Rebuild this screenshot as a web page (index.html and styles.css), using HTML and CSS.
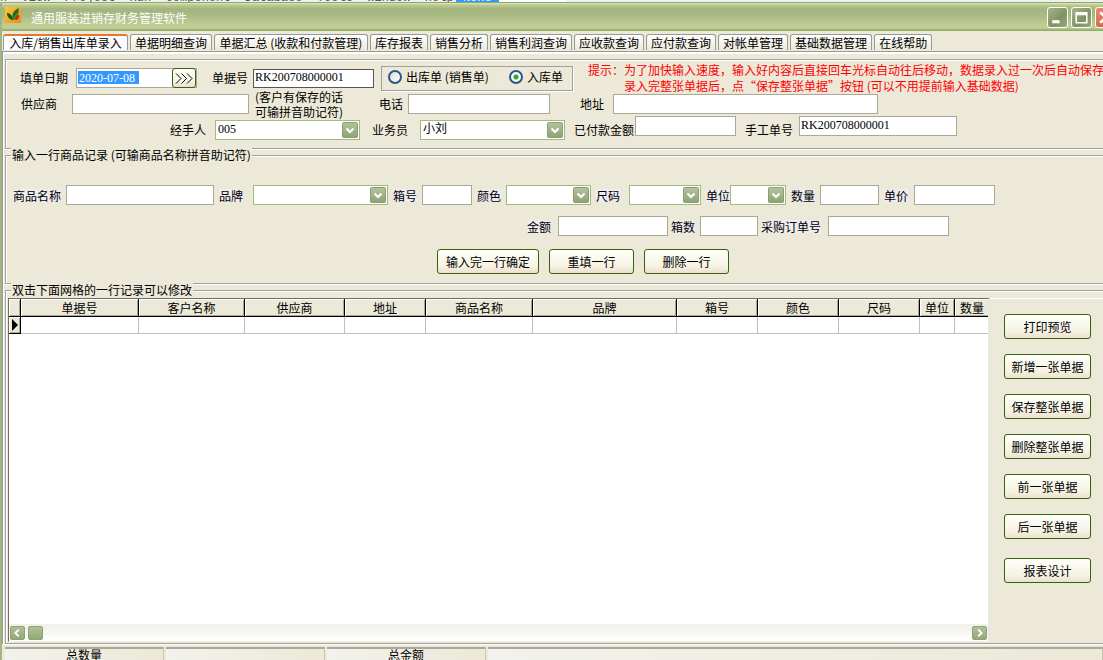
FILE: index.html
```html
<!DOCTYPE html>
<html lang="zh-CN">
<head>
<meta charset="utf-8">
<title>通用服装进销存财务管理软件</title>
<link rel="stylesheet" href="styles.css">
</head>
<body>
<svg class="defs" aria-hidden="true">
  <defs>
    <linearGradient id="btnGreen" x1="0" y1="0" x2="0" y2="1">
      <stop offset="0" stop-color="#b4c49c"/><stop offset="1" stop-color="#8ea272"/>
    </linearGradient>
    <symbol id="drop" viewBox="0 0 16 16">
      <rect x="0.5" y="0.5" width="15" height="15" rx="1" fill="url(#btnGreen)" stroke="#8a9c78"/>
      <path d="M4.500 6.500 8 10l3.500-3.500" fill="none" stroke="#fff" stroke-width="2.200"/>
    </symbol>
  </defs>
</svg>

<div class="backdrop"><span class="backdrop-menu">n&nbsp; View &nbsp;Project &nbsp;Run &nbsp;Component &nbsp;Database &nbsp;Tools &nbsp;Window &nbsp;Help</span><span class="backdrop-combo"><b>&lt;None&gt;</b></span></div>

<div class="window">
  <header class="titlebar">
    <svg class="logo" viewBox="0 0 16 16" aria-hidden="true">
      <defs><linearGradient id="lg" x1="0" y1="0" x2="1" y2="1"><stop offset="0" stop-color="#fcc83c"/><stop offset="1" stop-color="#ea8c14"/></linearGradient></defs>
      <rect width="16" height="16" fill="url(#lg)"/>
      <path d="M2 6c3 0 5 2 6 7C5 13 2 10 2 6z" fill="#0c5a1c"/>
      <path d="M8 13C6.500 8 8 4 13.500 1 14 6 12.500 11 8 13z" fill="#186a1c"/>
      <path d="M8.500 12c.500-3 2-5 4-7 0 3-1 6-4 7z" fill="#3c9a30"/>
      <path d="M10 13c0-3 1.500-5 4-5 .500 3-1 5-4 5z" fill="#c82818"/>
    </svg>
    <h1 class="title">通用服装进销存财务管理软件</h1>
    <div class="win-buttons">
      <button class="win-btn" aria-label="最小化"><svg viewBox="0 0 18 18"><path d="M4 13h7" stroke="#fff" stroke-width="3"/></svg></button>
      <button class="win-btn" aria-label="最大化"><svg viewBox="0 0 18 18"><path d="M4 4.500h10V14H4zM4 6h10" fill="none" stroke="#fff" stroke-width="1.500"/></svg></button>
      <button class="win-btn win-close" aria-label="关闭"><svg viewBox="0 0 18 18"><path d="M4 4l10 10M14 4 4 14" stroke="#fff" stroke-width="2.500"/></svg></button>
    </div>
  </header>

  <nav class="tabs">
    <button class="tab active">入库/销售出库单录入</button>
    <button class="tab">单据明细查询</button>
    <button class="tab wide">单据汇总 (收款和付款管理)</button>
    <button class="tab">库存报表</button>
    <button class="tab">销售分析</button>
    <button class="tab">销售利润查询</button>
    <button class="tab">应收款查询</button>
    <button class="tab">应付款查询</button>
    <button class="tab">对帐单管理</button>
    <button class="tab">基础数据管理</button>
    <button class="tab">在线帮助</button>
  </nav>

  <main class="page">
    <section class="group order">
      <div class="row order-a">
        <label for="date">填单日期</label>
        <div class="date-box"><input id="date" class="date-input" value="2020-07-08"><button class="push date-btn" aria-label="选择日期"><svg viewBox="0 0 18 11"><path d="M1 .5l5 5-5 5M6.500 .5l5 5-5 5M12 .5l5 5-5 5" fill="none" stroke="#000"/></svg></button></div>
        <label for="no">单据号</label>
        <input id="no" class="field dark" value="RK200708000001">
        <div class="radios">
          <label><input type="radio" name="kind">出库单 (销售单)</label>
          <label><input type="radio" name="kind" checked>入库单</label>
        </div>
        <p class="hint">提示：<span>为了加快输入速度，输入好内容后直接回车光标自动往后移动，数据录入过一次后自动保存<br>录入完整张单据后，点“保存整张单据”按钮 (可以不用提前输入基础数据)</span></p>
      </div>
      <div class="row order-b">
        <label for="supplier">供应商</label>
        <input id="supplier" class="field">
        <p class="note">(客户有保存的话<br>可输拼音助记符)</p>
        <label for="tel">电话</label>
        <input id="tel" class="field">
        <label for="addr" class="addr">地址</label>
        <input id="addr" class="field">
      </div>
      <div class="row order-c">
        <label for="handler">经手人</label>
        <span class="combo"><select id="handler"><option>005</option></select><svg><use href="#drop"/></svg></span>
        <label for="sales" class="sales">业务员</label>
        <span class="combo"><select id="sales"><option>小刘</option></select><svg><use href="#drop"/></svg></span>
        <label for="paid" class="close">已付款金额</label>
        <input id="paid" class="field top">
        <label for="manual" class="close">手工单号</label>
        <input id="manual" class="field top" value="RK200708000001">
      </div>
    </section>

    <section class="group entry">
      <h2 class="legend">输入一行商品记录 (可输商品名称拼音助记符)</h2>
      <div class="row entry-a">
        <label for="name">商品名称</label><input id="name" class="field">
        <label for="brand">品牌</label><span class="combo"><select id="brand"></select><svg><use href="#drop"/></svg></span>
        <label for="box">箱号</label><input id="box" class="field">
        <label for="color">颜色</label><span class="combo"><select id="color"></select><svg><use href="#drop"/></svg></span>
        <label for="size">尺码</label><span class="combo"><select id="size"></select><svg><use href="#drop"/></svg></span>
        <label for="unit">单位</label><span class="combo"><select id="unit"></select><svg><use href="#drop"/></svg></span>
        <label for="qty">数量</label><input id="qty" class="field">
        <label for="price">单价</label><input id="price" class="field">
      </div>
      <div class="row entry-b">
        <label for="amount">金额</label><input id="amount" class="field">
        <label for="boxes">箱数</label><input id="boxes" class="field">
        <label for="po">采购订单号</label><input id="po" class="field">
      </div>
      <div class="actions">
        <button class="push long">输入完一行确定</button>
        <button class="push">重填一行</button>
        <button class="push">删除一行</button>
      </div>
    </section>

    <section class="group records">
      <h2 class="legend">双击下面网格的一行记录可以修改</h2>
      <div class="records-body">
        <div class="grid">
          <div class="grid-view">
            <table>
              <colgroup><col class="w12"><col class="w118"><col class="w106"><col class="w100"><col class="w81"><col class="w107"><col class="w144"><col class="w81"><col class="w81"><col class="w81"><col class="w35"><col class="w35"></colgroup>
              <thead><tr><th></th><th>单据号</th><th>客户名称</th><th>供应商</th><th>地址</th><th>商品名称</th><th>品牌</th><th>箱号</th><th>颜色</th><th>尺码</th><th>单位</th><th>数量</th></tr></thead>
              <tbody><tr><th><svg class="marker" viewBox="0 0 6 12"><path d="M0 0l6 6-6 6z"/></svg></th><td></td><td></td><td></td><td></td><td></td><td></td><td></td><td></td><td></td><td></td><td></td></tr></tbody>
            </table>
          </div>
          <div class="scrollbar">
            <button class="scroll-btn" aria-label="向左"><svg viewBox="0 0 14 14"><path d="M8.500 3 4.500 7l4 4" fill="none" stroke="#fff" stroke-width="2.200"/></svg></button>
            <span class="thumb"></span>
            <button class="scroll-btn end" aria-label="向右"><svg viewBox="0 0 14 14"><path d="M5.500 3l4 4-4 4" fill="none" stroke="#fff" stroke-width="2.200"/></svg></button>
          </div>
        </div>
        <div class="side">
          <button class="push">打印预览</button>
          <button class="push">新增一张单据</button>
          <button class="push">保存整张单据</button>
          <button class="push">删除整张单据</button>
          <button class="push">前一张单据</button>
          <button class="push">后一张单据</button>
          <button class="push last">报表设计</button>
        </div>
      </div>
    </section>
  </main>

  <footer class="status">
    <span>总数量</span><span></span><span>总金额</span><span></span>
  </footer>
</div>
</body>
</html>
```
FILE: styles.css
```css
* { box-sizing: border-box; }

body, button, input, select, h1, h2, p {
  margin: 0;
  font: 12px/16px "Noto Sans CJK SC", sans-serif;
  color: #000;
}

body {
  height: 100vh;
  overflow: hidden;
  display: flex;
  flex-direction: column;
  background: #ece9d8;
}

input, select { font-family: "Liberation Serif", "Noto Sans CJK SC", serif; }

.defs { position: absolute; width: 0; height: 0; }

/* strip of the window behind */
.backdrop {
  flex: none;
  height: 2px;
  display: flex;
  align-items: flex-end;
  gap: 2px;
  overflow: hidden;
  background: #f0f0f0;
  font: 12px/8px "Liberation Mono", monospace;
  white-space: nowrap;
}
.backdrop-menu { color: #555; }
.backdrop-combo { width: 110px; background: #fff; }
.backdrop-combo b { background: #39f; color: #fff; font-weight: 400; }

.window {
  flex: 1;
  min-height: 0;
  display: flex;
  flex-direction: column;
  border-left: 2px solid #a3b57f;
}

.titlebar {
  flex: none;
  height: 29px;
  display: flex;
  align-items: center;
  padding-left: 3px;
  border-top: 1px solid #8fa86a;
  border-bottom: 1px solid #92ab68;
  background: linear-gradient(#dfe8b8 0, #bccb92 2px, #a4b47e 6px, #a9b984 12px, #c0cc94 22px, #c0cc94 25px, #9db070 27px);
}
.logo { width: 16px; height: 16px; margin-bottom: 4px; }
.title { padding-left: 10px; padding-top: 2px; color: #fff; }
.win-buttons { display: flex; gap: 3px; margin-left: auto; margin-right: -13px; padding-top: 2px; }
.win-btn {
  width: 21px;
  height: 21px;
  padding: 0;
  border: 1px solid #fff;
  border-radius: 3px;
  background: linear-gradient(135deg, #a5b58c, #7f9260 60%, #9cad7c);
}
.win-btn svg { display: block; }
.win-close { background: linear-gradient(135deg, #e89070, #c8502c); }

.tabs { flex: none; display: flex; padding: 3px 0 0 1px; gap: 2px; height: 20px; }
.tab {
  padding: 0 4px;
  height: 16px;
  line-height: 13px;
  white-space: nowrap;
  border: 1px solid #919b9c;
  border-bottom: 0;
  border-radius: 3px 3px 0 0;
  background: linear-gradient(#fff, #ece9d8);
}
.tab.active { width: 125px; background: #fcfcfe; border-top: 2px solid #e07a30; line-height: 12px; }
.tab.wide { width: 154px; }

.page {
  flex: 1;
  min-height: 0;
  display: flex;
  flex-direction: column;
  gap: 6px;
  padding: 7px 0 0 2px;
  border-top: 1px solid #919b9c;
  border-left: 1px solid #919b9c;
  box-shadow: inset 1px 2px #fff;
}

.group {
  border: solid #a0a0a0;
  border-width: 1px 0 1px 1px;
  box-shadow: inset 1px 1px #fff, 0 1px #fff;
}
.legend { width: max-content; padding: 0 1px; margin: -9px 0 0 5px; background: #ece9d8; white-space: nowrap; }

.row { display: grid; align-items: center; white-space: nowrap; }

.field {
  width: 100%;
  height: 20px;
  padding: 0 1px 2px;
  border: 1px solid #aca899;
  background: #fff;
}
.field.dark { height: 19px; border-color: #555; }
.field.top { align-self: start; }

.combo { position: relative; display: flex; width: 100%; height: 20px; }
.combo select {
  appearance: none;
  width: 100%;
  padding: 0 18px 2px 2px;
  border: 1px solid #a4b97f;
  border-radius: 0;
  background: #fff;
}
.combo svg { position: absolute; right: 2px; top: 2px; width: 16px; height: 16px; pointer-events: none; }

.order { height: 90px; padding-top: 2px; }
.order .row { height: 27px; column-gap: 5px; }
.order-a { grid-template-columns: 51px 121px 46px 121px auto 1fr; padding-left: 14px; }
.order-a > label:nth-of-type(2) { text-align: right; }
.order-b { grid-template-columns: 46px 177px 120px 24px 142px 53px 265px; padding-left: 15px; }
.addr { text-align: right; padding-right: 4px; }
.order-c { grid-template-columns: 40px 145px 50px 145px 60px 101px 53px 158px; padding-left: 164px; }
.sales { text-align: center; }
.close { padding-left: 4px; }

.date-box { display: flex; height: 20px; border: 1px solid #aca899; background: #fff; }
.date-input {
  flex: 1;
  min-width: 0;
  padding: 0 2px 1px;
  border: 0;
  color: #fff;
  background: linear-gradient(#39f, #39f) 1px 2px / 61px 13px no-repeat;
}
.date-btn svg { display: block; width: 18px; height: 11px; }

.radios {
  width: 192px;
  height: 25px;
  display: flex;
  align-items: center;
  justify-content: space-between;
  margin-left: 2px;
  padding: 0 9px 2px 6px;
  border: 1px solid #a0a0a0;
  box-shadow: 1px 1px #fff;
}
.radios label { display: flex; align-items: center; gap: 4px; }
.radios input {
  appearance: none;
  width: 14px;
  height: 14px;
  margin: 0;
  border: 2px solid #2c5887;
  border-radius: 50%;
  background: linear-gradient(135deg, #dcdcd4, #fff);
}
.radios input:checked { background: radial-gradient(circle, #2aaa2a 2px, #f6f6f2 3px); }

.hint { display: flex; color: #f00; padding-left: 10px; }
.note { line-height: 15px; padding-left: 1px; }

.entry { height: 129px; }
.entry .row { height: 20px; }
.entry label { justify-self: start; background: #eeecf0; line-height: 13px; }
.entry-a { grid-template-columns: 53px 148px 39px 135px 34px 50px 34px 85px 38px 72px 29px 56px 34px 59px 35px 81px; padding-left: 7px; margin-top: 22px; }
.entry-a > label:nth-of-type(n+2) { margin-left: 5px; }
.entry-b { grid-template-columns: 31px 110px 32px 58px 70px 121px; padding-left: 521px; margin-top: 11px; }
.entry-b > label:nth-of-type(n+2) { margin-left: 3px; }

.push {
  min-width: 85px;
  height: 25px;
  padding: 0 6px;
  border: 1px solid #37620d;
  border-radius: 3px;
  background: linear-gradient(#fffffa, #f6f3e4 70%, #ece0cc);
  white-space: nowrap;
}
.push.long { min-width: 102px; }
.date-btn { min-width: 24px; height: 20px; padding: 0 2px; margin-top: -1px; }
.actions { display: flex; gap: 10px; margin-top: 13px; padding-left: 431px; }

.records { flex: 1; min-height: 0; display: flex; flex-direction: column; }
.records-body { flex: 1; min-height: 0; display: flex; padding: 0 0 1px 2px; }
.grid {
  flex: 1;
  min-width: 0;
  display: flex;
  flex-direction: column;
  border: 1px solid #716f64;
  border-right: 2px solid #e8e6e0;
  border-bottom-color: #f1efe2;
  background: #fff;
}
.grid-view { flex: 1; overflow: hidden; }
table { table-layout: fixed; width: 961px; border-collapse: separate; border-spacing: 0; }
.w12 { width: 12px; } .w35 { width: 35px; } .w81 { width: 81px; } .w100 { width: 100px; }
.w106 { width: 106px; } .w107 { width: 107px; } .w118 { width: 118px; } .w144 { width: 144px; }
th, td { height: 17px; padding: 0; font-weight: 400; line-height: 15px; white-space: nowrap; }
th {
  height: 18px;
  background: #ece9d8;
  border-right: 1px solid #000;
  border-bottom: 1px solid #000;
  box-shadow: inset 1px 1px #fff, inset -1px -1px #aca899;
}
td { border-right: 1px solid #c0c0c0; border-bottom: 1px solid #c0c0c0; }
tbody th { height: 17px; }
.marker { display: block; width: 6px; height: 12px; margin-left: 3px; }

.scrollbar { flex: none; height: 17px; display: flex; align-items: center; gap: 3px; padding: 0 1px; background: linear-gradient(#f0efe8, #fff); }
.scroll-btn, .thumb { width: 15px; height: 14px; padding: 0; border: 1px solid #8fa175; border-radius: 2px; background: linear-gradient(#b0c098, #94a878); }
.scroll-btn svg { display: block; width: 13px; height: 12px; }
.scroll-btn.end { margin-left: auto; }

.side { flex: none; width: 113px; display: flex; flex-direction: column; align-items: flex-start; gap: 15px; padding: 15px 0 0 14px; border-top: 1px solid #fff; }
.side .push { min-width: 87px; }
.side .last { margin-top: 4px; }

.status { flex: none; height: 16px; display: flex; gap: 2px; padding: 2px 0 0 3px; border-top: 1px solid #fff; overflow: hidden; }
.status span {
  width: 159px;
  height: 20px;
  text-align: center;
  font-size: 12px;
  line-height: 11px;
  border-top: 2px solid #aca899;
  border-right: 1px solid #c8c4b4;
  background: linear-gradient(90deg, #f2f2ee, #ece9d8);
}
.status span:last-child { flex: 1; }
```
